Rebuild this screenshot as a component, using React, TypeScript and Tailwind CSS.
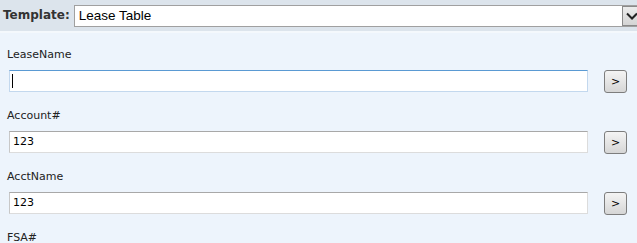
import React from "react";

function ArrowBtn() {
  return (
    <button className="ml-[16px] flex h-[23px] w-[23px] items-center justify-center rounded-[3px] border border-[#7d7d7d] bg-gradient-to-b from-[#f4f4f4] to-[#d6d6d6] text-[11px] leading-none text-black [font-family:'DejaVu_Sans',sans-serif]">
      &gt;
    </button>
  );
}

function Field({ label, value, focused }: { label: string; value: string; focused?: boolean }) {
  return (
    <div className="flex flex-col">
      <div className="flex h-[20px] items-center pl-[7px] text-[11px] text-[#222]">{label}</div>
      <div className="mt-[5px] mb-[13px] flex items-start pl-[9px]">
        <div
          className={
            "flex h-[22px] w-[579px] items-center bg-white pl-[3px] text-[11px] text-black " +
            (focused
              ? "border border-[#c3d8ee] border-t-[#5a9ad3]"
              : "border border-[#dcdcdc] border-t-[#a8a8a8] border-l-[#c8c8c8]")
          }
        >
          {focused ? <span className="ml-[-1px] h-[14px] w-[1px] bg-black" /> : value}
        </div>
        <ArrowBtn />
      </div>
    </div>
  );
}

export default function App() {
  return (
    <div className="h-[243px] w-[637px] overflow-hidden bg-[#edf4fc] [font-family:'DejaVu_Sans',sans-serif]">
      <div className="flex h-[31px] items-start bg-[#dce4ec]">
        <div className="mt-[7px] pl-[3px] text-[12px] font-bold leading-[16px] text-[#333]">Template:</div>
        <div className="ml-[4px] mt-[5px] flex h-[22px] w-[572px] shrink-0 items-center border border-[#a0a0a0] bg-white">
          <span className="pl-[4px] text-[13.5px] text-black [font-family:'Liberation_Sans',sans-serif]">Lease Table</span>
          <div className="ml-auto mr-[3px] flex h-[20px] w-[20px] items-center justify-center border border-[#8a8a8a] bg-gradient-to-b from-[#ececec] to-[#d4d4d4]">
            <svg width="12" height="8" viewBox="0 0 12 8">
              <path d="M1 1.5 L6 6.5 L11 1.5" fill="none" stroke="#222" strokeWidth="2" />
            </svg>
          </div>
        </div>
      </div>
      <div className="h-[2px] bg-[#f4f8fc]" />
      <div className="pt-[12px]">
        <Field label="LeaseName" value="" focused />
        <Field label="Account#" value="123" />
        <Field label="AcctName" value="123" />
        <div className="flex h-[20px] items-center pl-[7px] text-[11px] text-[#222]">FSA#</div>
      </div>
    </div>
  );
}
